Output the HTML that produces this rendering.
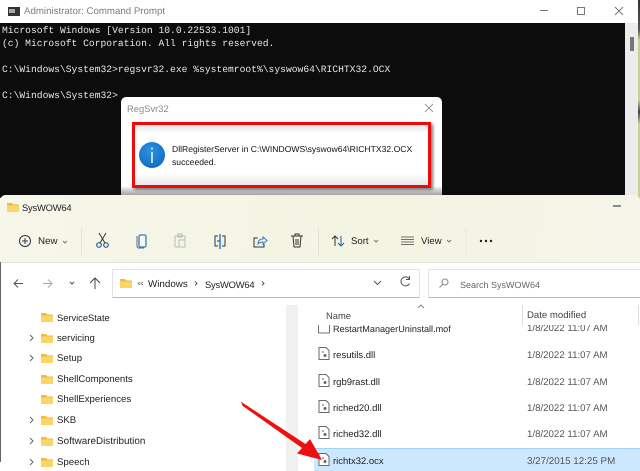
<!DOCTYPE html>
<html><head><meta charset="utf-8"><style>
html,body{margin:0;padding:0}
body{width:640px;height:471px;overflow:hidden;position:relative;background:#fff;font-family:"Liberation Sans",sans-serif;text-rendering:geometricPrecision;filter:blur(.25px)}
div{position:absolute}
.t{position:absolute;white-space:nowrap;line-height:14px;color:#222;font-size:9.6px}
.d{color:#555;left:527px;font-size:9.7px}
.f{left:333px;font-size:9.5px}
.m{position:absolute;white-space:pre;font:9.67px/13px "Liberation Mono",monospace;color:#e6e6e6;left:2px}
svg{position:absolute;left:0;top:0}
</style></head><body>
<div style="left:0;top:0;width:638px;height:200px;background:#fff;border-radius:0 6px 0 0"></div>
<div style="left:638px;top:0;width:2px;height:200px;background:linear-gradient(#333,#555 15%,#c9cf9a 20%,#c9cf9a 50%,#444 56%,#c9cf9a 62%)"></div>
<div style="left:0;top:23px;width:625px;height:175px;background:#0c0c0c"></div>
<div style="left:625px;top:23px;width:13px;height:175px;background:#ececec"></div>
<div style="left:630px;top:37px;width:4px;height:14px;background:#777"></div>
<div class="t" style="left:24px;top:5px;font-size:9.7px;color:#7d7d7d">Administrator: Command Prompt</div>
<div style="left:8px;top:7px;width:12px;height:9px;background:#333"></div>
<div style="left:9px;top:9px;width:6px;height:4px;background:#aaa"></div>
<div class="m" style="top:24px">Microsoft Windows [Version 10.0.22533.1001]</div>
<div class="m" style="top:37px">(c) Microsoft Corporation. All rights reserved.</div>
<div class="m" style="top:63px">C:\Windows\System32&gt;regsvr32.exe %systemroot%\syswow64\RICHTX32.OCX</div>
<div class="m" style="top:89px">C:\Windows\System32&gt;</div>

<div style="left:121px;top:97px;width:321px;height:100px;background:#fff;border-radius:5px 5px 0 0"></div>
<div style="left:121px;top:187px;width:321px;height:10px;background:linear-gradient(#f0f0f0,#8f8f8f)"></div>
<div class="t" style="left:127px;top:102px;font-size:9.4px;color:#8a8a8a">RegSvr32</div>
<div style="left:132px;top:122px;width:293px;height:60px;border:3px solid #ee0a0a;background:linear-gradient(#e4e4e4,#fff 14%,#fff 80%,#e8e8e8);box-shadow:2px 2px 3px #777"></div>
<div style="left:139px;top:142px;width:26px;height:26px;border-radius:50%;background:radial-gradient(circle at 45% 35%,#2d93e2,#0a62b8)"></div>
<div class="t" style="left:172px;top:142px;font-size:8.6px;color:#111">DllRegisterServer in C:\WINDOWS\syswow64\RICHTX32.OCX</div>
<div class="t" style="left:172px;top:155px;font-size:8.6px;color:#111">succeeded.</div>

<div style="left:0;top:195px;width:640px;height:276px;background:#fff;border-radius:6px 6px 0 0"></div>
<div style="left:0;top:195px;width:640px;height:67px;background:linear-gradient(100deg,#f6f6ea,#f4f4e2 60%,#f5f5ea);border-radius:6px 6px 0 0;border-bottom:1px solid #e2e2d8"></div>
<div style="left:0;top:262px;width:1px;height:200px;background:#666"></div>

<div class="t" style="left:22px;top:201px;font-size:9.4px;color:#222;letter-spacing:-.2px">SysWOW64</div>
<div class="t" style="left:38px;top:235px;font-size:9.8px;color:#222">New</div>
<div class="t" style="left:351px;top:235px;font-size:9.6px;color:#222">Sort</div>
<div class="t" style="left:421px;top:235px;font-size:9.6px;color:#222">View</div>

<div style="left:112px;top:269px;width:306px;height:27px;border:1px solid #e2e2e2;border-bottom-color:#bbb;background:#fff"></div>
<div style="left:428px;top:269px;width:212px;height:27px;border:1px solid #e2e2e2;border-bottom-color:#bbb;background:#fff"></div>
<div class="t" style="left:148px;top:278px;font-size:9.8px">Windows</div>
<div class="t" style="left:205px;top:278px;font-size:9.4px;letter-spacing:-.2px">SysWOW64</div>
<div class="t" style="left:460px;top:278px;font-size:9px;color:#666">Search SysWOW64</div>

<div class="t" style="left:57px;top:311px;font-size:9.3px">ServiceState</div>
<div class="t" style="left:57px;top:332px">servicing</div>
<div class="t" style="left:57px;top:352px">Setup</div>
<div class="t" style="left:57px;top:373px">ShellComponents</div>
<div class="t" style="left:57px;top:393px">ShellExperiences</div>
<div class="t" style="left:57px;top:414px">SKB</div>
<div class="t" style="left:57px;top:435px;font-size:9.9px">SoftwareDistribution</div>
<div class="t" style="left:57px;top:456px">Speech</div>

<div style="left:286px;top:305px;width:12px;height:166px;background:#f0f0f0"></div>
<div style="left:314px;top:448px;width:326px;height:23px;background:#cce8ff;border-top:1px solid #a9d3f2;box-sizing:border-box"></div>

<div class="t f" style="top:322px;font-size:9.1px">RestartManagerUninstall.mof</div>
<div class="t d" style="top:322px">1/8/2022 11:07 AM</div>
<div style="left:300px;top:305px;width:340px;height:20px;background:#fff"></div>
<div class="t" style="left:326px;top:309px;color:#444;font-size:9.4px">Name</div>
<div class="t" style="left:527px;top:309px;color:#444;font-size:9.6px">Date modified</div>
<div style="left:522px;top:305px;width:1px;height:20px;background:#ddd"></div>
<div style="left:638px;top:305px;width:1px;height:20px;background:#ddd"></div>

<div class="t f" style="top:349px">resutils.dll</div>
<div class="t f" style="top:376px">rgb9rast.dll</div>
<div class="t f" style="top:402px">riched20.dll</div>
<div class="t f" style="top:428px">riched32.dll</div>
<div class="t f" style="top:455px">richtx32.ocx</div>
<div class="t d" style="top:349px">1/8/2022 11:07 AM</div>
<div class="t d" style="top:376px">1/8/2022 11:07 AM</div>
<div class="t d" style="top:402px">1/8/2022 11:07 AM</div>
<div class="t d" style="top:428px">1/8/2022 11:07 AM</div>
<div class="t d" style="top:455px;font-size:9.8px">3/27/2015 12:25 PM</div>

<svg width="640" height="471" viewBox="0 0 640 471">
<defs>
<g id="fo"><path d="M0 1h5l1.500 1.500H12V10H0z" fill="#f0bc3c"/><path d="M0 3.500h12V10H0z" fill="#fad568"/></g>
<g id="fi" fill="#fff" stroke="#6a6a6a" stroke-width="1"><path d="M.5.500H7.500L10.500 3.500V12.500H.5z"/><circle cx="6.500" cy="8.500" r="1.500" fill="#666" stroke="none"/><circle cx="4.500" cy="5" r="1" fill="#999" stroke="none"/></g>
<polyline id="cv" points="0,0 3,3 0,6" fill="none" stroke="#666"/>
</defs>
<!-- window controls -->
<g fill="none" stroke="#777" stroke-width="1">
<path d="M540 10.500h8"/><rect x="577.500" y="7.500" width="7" height="7"/><path d="M615 7l8 8M623 7l-8 8"/>
<path d="M425 104l8 8M433 104l-8 8" stroke="#999"/>
</g>
<path d="M613 206h8" stroke="#222" stroke-width="1"/>
<!-- info glyph -->
<path d="M152 152v11" stroke="#dff0ff" stroke-width="1.600"/><circle cx="152" cy="148.500" r="1" fill="#dff0ff"/>
<!-- folders -->
<use href="#fo" x="7" y="202"/>
<use href="#fo" x="120" y="278"/>
<use href="#fo" x="41" y="312"/><use href="#fo" x="41" y="333"/><use href="#fo" x="41" y="353"/><use href="#fo" x="41" y="374"/><use href="#fo" x="41" y="394"/><use href="#fo" x="41" y="415"/><use href="#fo" x="41" y="436"/><use href="#fo" x="41" y="457"/>
<use href="#cv" x="30" y="335"/><use href="#cv" x="30" y="355"/><use href="#cv" x="30" y="417"/><use href="#cv" x="30" y="438"/><use href="#cv" x="30" y="459"/>
<!-- toolbar -->
<circle cx="25" cy="241" r="5.500" fill="none" stroke="#334" stroke-width="1"/><path d="M22 241h6M25 238v6" stroke="#334"/>
<path d="M63 241l2 2 2-2" fill="none" stroke="#777"/>
<path d="M81.500 228v27" stroke="#e2e2d6"/>
<g fill="none" stroke="#1c5f9e" stroke-width="1.200"><circle cx="99" cy="245" r="2.300"/><circle cx="106" cy="245" r="2.300"/></g>
<path d="M100 243l6-10M105 243l-6-10" stroke="#333" fill="none"/>
<rect x="139" y="235" width="7" height="12" rx="1.500" fill="#f7f7ee" stroke="#2a7fc7" stroke-width="1.300"/><path d="M137 236v10q0 2 2 2h5" fill="none" stroke="#667"/>
<g fill="none" stroke="#b8bdbd"><rect x="175" y="236" width="10" height="11" rx="1"/><rect x="179" y="240" width="6" height="7"/><path d="M178 234h4v3h-4z"/></g>
<g fill="none" stroke="#333"><path d="M218 236h-3v10h3M222 236h3v10h-3"/></g><path d="M220 234v15M217 241h3" stroke="#2a7fc7" stroke-width="1.500"/>
<g fill="none" stroke="#333"><path d="M258 238h-4v9h10v-3"/></g><path d="M258 244q0-5 5-5v-2l4 3.500-4 3.500v-2q-3 0-5 2z" fill="none" stroke="#2a7fc7"/>
<g fill="none" stroke="#333"><path d="M291 236h12M293 236l1 11h6l1-11M295 236v-2h4v2M296 239v6M298 239v6"/></g>
<path d="M318.500 228v27" stroke="#e2e2d6"/>
<path d="M335 246v-10m-3 3l3-3 3 3" fill="none" stroke="#333"/><path d="M341 236v10m-3-3l3 3 3-3" fill="none" stroke="#1c5f9e"/>
<path d="M374 240l2 2 2-2M447 240l2 2 2-2" fill="none" stroke="#777"/>
<path d="M401 237h13M401 239.500h13M401 242h13M401 244.500h13" stroke="#444" stroke-width=".8"/>
<path d="M466 228v27" stroke="#e8e8dc"/>
<g fill="#222"><circle cx="481" cy="241" r="1.200"/><circle cx="486" cy="241" r="1.200"/><circle cx="491" cy="241" r="1.200"/></g>
<!-- nav -->
<path d="M23 283.500h-9m4-4l-4 4 4 4" fill="none" stroke="#555"/>
<path d="M43 283.500h9m-4-4l4 4-4 4" fill="none" stroke="#aaa"/>
<path d="M70 282l2 2 2-2" fill="none" stroke="#555"/>
<path d="M95 289v-11m-5 5l5-5 5 5" fill="none" stroke="#444"/>
<path d="M140 282l-2 1.500 2 1.500M143 282l-2 1.500 2 1.500" fill="none" stroke="#777" stroke-width=".8"/>
<path d="M195 281.500l2 2-2 2M262 281.500l2 2-2 2" fill="none" stroke="#555"/>
<path d="M374 281l3.500 3.500 3.500-3.500" fill="none" stroke="#555"/>
<path d="M409 278.500a4.500 4.500 0 1 0 .5 5M409.500 276v3.500H406" fill="none" stroke="#555"/>
<circle cx="445" cy="282" r="3" fill="none" stroke="#888"/><path d="M443 284l-3.500 3.500" stroke="#888"/>
<!-- sort caret in header -->
<path d="M418 308l3-3 3 3" fill="none" stroke="#888"/>
<!-- file icons -->
<path d="M318.500 325v8h11v-8" fill="none" stroke="#777"/>
<use href="#fi" x="318.500" y="347"/>
<use href="#fi" x="318.500" y="374"/>
<use href="#fi" x="318.500" y="400"/>
<use href="#fi" x="318.500" y="426"/>
<use href="#fi" x="318.500" y="453"/>
<!-- red arrow -->
<path d="M242 403L243 405.500L305 449.500L307 445.500z" fill="#ee1010" stroke="#ee1010" stroke-width="1"/>
<path d="M322 460L297 453.500L310 439z" fill="#ee1010"/>
</svg>
</body></html>
